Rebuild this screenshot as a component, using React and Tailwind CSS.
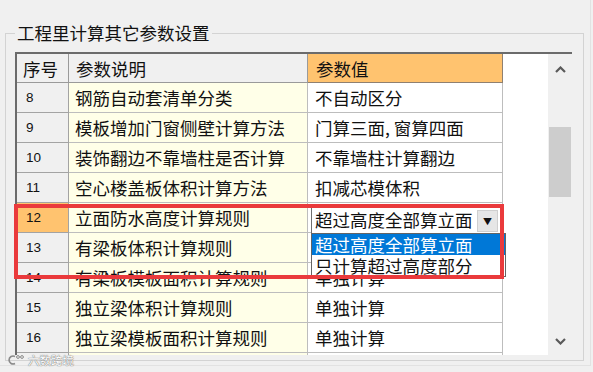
import React from "react";

const rows = [
  ["8", "钢筋自动套清单分类", "不自动区分"],
  ["9", "模板增加门窗侧壁计算方法", "门算三面, 窗算四面"],
  ["10", "装饰翻边不靠墙柱是否计算", "不靠墙柱计算翻边"],
  ["11", "空心楼盖板体积计算方法", "扣减芯模体积"],
  ["12", "立面防水高度计算规则", null],
  ["13", "有梁板体积计算规则", "单独计算"],
  ["14", "有梁板模板面积计算规则", "单独计算"],
  ["15", "独立梁体积计算规则", "单独计算"],
  ["16", "独立梁模板面积计算规则", "单独计算"],
  ["17", "", ""],
];

function Chevron({ down }) {
  return (
    <svg width="11" height="7" viewBox="0 0 11 7">
      <polyline
        points={down ? "1,1 5.5,5.5 10,1" : "1,6 5.5,1.5 10,6"}
        fill="none"
        stroke="#5a5a5a"
        strokeWidth="2.2"
      />
    </svg>
  );
}

export default function App() {
  return (
    <div className="relative w-[593px] h-[372px] overflow-hidden bg-[#f0f0f0] text-[#111] font-['Noto_Sans_CJK_SC',sans-serif]">
      <div className="w-[591px] h-[366px] border-r border-b border-[#e2e2e2] pt-[22px]">
        <fieldset className="ml-[5px] w-[579px] h-[339px] border border-[#d3d3d3] pl-[9px]">
          <legend className="px-[2px] text-[17.5px] leading-[22px]">工程里计算其它参数设置</legend>
          <div className="mt-[8px] w-[557px] h-[303px] border-t-2 border-l-2 border-[#6b6b6b] flex overflow-hidden bg-white">
            <div className="w-[531px] flex flex-col">
              <div className="flex h-[29px] shrink-0 text-[17.5px] leading-[29px]">
                <div className="w-[52px] bg-[#f0f0f0] border-r border-b border-[#9a9a9a] pl-[6px]">序号</div>
                <div className="w-[239px] bg-[#f0f0f0] border-r border-b border-[#9a9a9a] pl-[7px]">参数说明</div>
                <div className="w-[195px] bg-[#ffc36f] border-r border-b border-[#8f8070] pl-[8px]">参数值</div>
              </div>
              {rows.map(([n, desc, val]) => {
                const sel = n === "12";
                return (
                  <div key={n} className="flex h-[30px] shrink-0">
                    <div
                      className={`w-[52px] border-r border-b border-[#a3a3a3] pl-[9px] text-[13.5px] leading-[30px] font-['Liberation_Sans',sans-serif] ${
                        sel ? "bg-[#ffc36f]" : "bg-[#f0f0f0]"
                      }`}
                    >
                      {n}
                    </div>
                    <div className="w-[239px] bg-[#ffffe8] border-r border-b border-[#bdbdbd] pl-[6px] text-[17.5px] leading-[30px]">
                      {desc}
                    </div>
                    <div className="w-[195px] bg-white border-r border-b border-[#bdbdbd] text-[17.5px] leading-[30px]">
                      {sel ? (
                        <div className="ml-[3px] mt-[4px] mr-[2px] h-[26px] flex items-start border-l border-t border-[#6f6f6f] bg-white">
                          <span className="pl-[3px] leading-[24px] whitespace-nowrap overflow-hidden w-[165px]">超过高度全部算立面</span>
                          <div className="mt-[2px] w-[21px] h-[22px] bg-[#e6e6e6] border border-[#cfcfcf] flex items-center justify-center text-[9px] leading-none">
                            ▼
                          </div>
                        </div>
                      ) : (
                        <span className="pl-[7px]">{val}</span>
                      )}
                    </div>
                  </div>
                );
              })}
            </div>
            <div className="w-[24px] bg-[#f0f0f0] flex flex-col">
              <div className="h-[30px] flex items-center justify-center">
                <Chevron />
              </div>
              <div className="flex-1">
                <div className="mt-[43px] mx-[1px] h-[70px] bg-[#cdcdcd]" />
              </div>
              <div className="h-[28px] flex items-center justify-center">
                <Chevron down />
              </div>
            </div>
          </div>
        </fieldset>
      </div>

      <div className="absolute left-[311px] top-[233px] w-[195px] h-[44px] bg-white border border-[#646464] text-[17.5px] leading-[21px]">
        <div className="h-[21px] bg-[#0078d7] text-white pl-[3px] whitespace-nowrap">超过高度全部算立面</div>
        <div className="h-[21px] pl-[3px] whitespace-nowrap">只计算超过高度部分</div>
      </div>

      <div className="absolute left-[14px] top-[204px] w-[490px] h-[75px] border-4 border-[#ea3a3c]" />

      <div className="absolute left-[7px] top-[352px] flex items-center gap-[3px] text-white text-[11.5px] leading-[16px] [text-shadow:0_0_1px_#6a6a6a,0_0_1px_#6a6a6a]">
        <svg width="18" height="12" viewBox="0 0 18 12">
          <path d="M8 2.5 A4 4 0 1 0 8 9.5" fill="none" stroke="#8a8a8a" strokeWidth="1.6" />
          <circle cx="11" cy="3" r="1.4" fill="none" stroke="#8a8a8a" strokeWidth="1" />
          <circle cx="15" cy="3" r="1.4" fill="none" stroke="#8a8a8a" strokeWidth="1" />
        </svg>
        <span>六数跨境</span>
      </div>
    </div>
  );
}
